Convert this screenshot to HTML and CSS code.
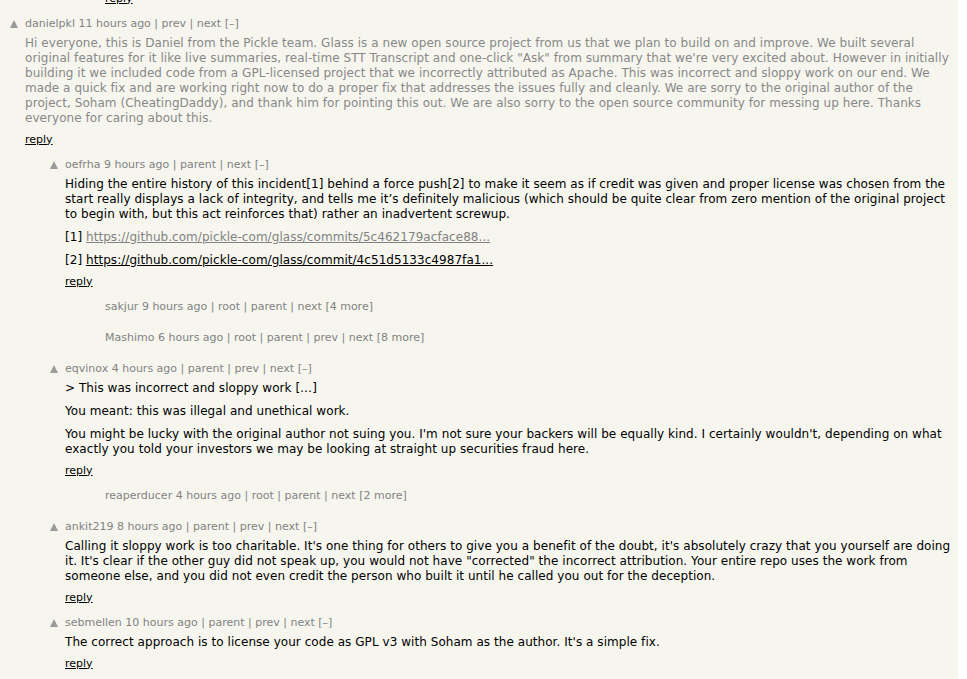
FILE: index.html
```html
<!DOCTYPE html>
<html>
<head>
<meta charset="utf-8">
<title>Hacker News comments</title>
<link rel="stylesheet" href="styles.css">
</head>
<body>
<div class="page">
  <div class="thread">
    <div class="comment d2 stub">
      <div class="vote"></div>
      <div class="main"><div class="reply"><a href="#">reply</a></div></div>
    </div>

    <div class="comment d0">
      <div class="vote"><span class="arrow"></span></div>
      <div class="main">
        <div class="head"><a href="#">danielpkl</a> <a href="#">11 hours ago</a> | <a href="#">prev</a> | <a href="#">next</a> [–]</div>
        <div class="text faded"><p>Hi everyone, this is Daniel from the Pickle team. Glass is a new open source project from us that we plan to build on and improve. We built several original features for it like live summaries, real-time STT Transcript and one-click "Ask" from summary that we're very excited about. However in initially building it we included code from a GPL-licensed project that we incorrectly attributed as Apache. This was incorrect and sloppy work on our end. We made a quick fix and are working right now to do a proper fix that addresses the issues fully and cleanly. We are sorry to the original author of the project, Soham (CheatingDaddy), and thank him for pointing this out. We are also sorry to the open source community for messing up here. Thanks everyone for caring about this.</p></div>
        <div class="reply"><a href="#">reply</a></div>
      </div>
    </div>

    <div class="comment d1">
      <div class="vote"><span class="arrow"></span></div>
      <div class="main">
        <div class="head"><a href="#">oefrha</a> <a href="#">9 hours ago</a> | <a href="#">parent</a> | <a href="#">next</a> [–]</div>
        <div class="text">
          <p>Hiding the entire history of this incident[1] behind a force push[2] to make it seem as if credit was given and proper license was chosen from the start really displays a lack of integrity, and tells me it’s definitely malicious (which should be quite clear from zero mention of the original project to begin with, but this act reinforces that) rather an inadvertent screwup.</p>
          <p>[1] <a class="visited" href="#">https://github.com/pickle-com/glass/commits/5c462179acface88...</a></p>
          <p>[2] <a href="#">https://github.com/pickle-com/glass/commit/4c51d5133c4987fa1...</a></p>
        </div>
        <div class="reply"><a href="#">reply</a></div>
      </div>
    </div>

    <div class="comment d2 collapsed">
      <div class="vote"></div>
      <div class="main">
        <div class="head"><a href="#">sakjur</a> <a href="#">9 hours ago</a> | <a href="#">root</a> | <a href="#">parent</a> | <a href="#">next</a> [4 more]</div>
      </div>
    </div>

    <div class="comment d2 collapsed">
      <div class="vote"></div>
      <div class="main">
        <div class="head"><a href="#">Mashimo</a> <a href="#">6 hours ago</a> | <a href="#">root</a> | <a href="#">parent</a> | <a href="#">prev</a> | <a href="#">next</a> [8 more]</div>
      </div>
    </div>

    <div class="comment d1">
      <div class="vote"><span class="arrow"></span></div>
      <div class="main">
        <div class="head"><a href="#">eqvinox</a> <a href="#">4 hours ago</a> | <a href="#">parent</a> | <a href="#">prev</a> | <a href="#">next</a> [–]</div>
        <div class="text">
          <p>&gt; This was incorrect and sloppy work […]</p>
          <p>You meant: this was illegal and unethical work.</p>
          <p>You might be lucky with the original author not suing you. I'm not sure your backers will be equally kind. I certainly wouldn't, depending on what exactly you told your investors we may be looking at straight up securities fraud here.</p>
        </div>
        <div class="reply"><a href="#">reply</a></div>
      </div>
    </div>

    <div class="comment d2 collapsed">
      <div class="vote"></div>
      <div class="main">
        <div class="head"><a href="#">reaperducer</a> <a href="#">4 hours ago</a> | <a href="#">root</a> | <a href="#">parent</a> | <a href="#">next</a> [2 more]</div>
      </div>
    </div>

    <div class="comment d1">
      <div class="vote"><span class="arrow"></span></div>
      <div class="main">
        <div class="head"><a href="#">ankit219</a> <a href="#">8 hours ago</a> | <a href="#">parent</a> | <a href="#">prev</a> | <a href="#">next</a> [–]</div>
        <div class="text">
          <p>Calling it sloppy work is too charitable. It's one thing for others to give you a benefit of the doubt, it's absolutely crazy that you yourself are doing it. It's clear if the other guy did not speak up, you would not have "corrected" the incorrect attribution. Your entire repo uses the work from someone else, and you did not even credit the person who built it until he called you out for the deception.</p>
        </div>
        <div class="reply"><a href="#">reply</a></div>
      </div>
    </div>

    <div class="comment d1">
      <div class="vote"><span class="arrow"></span></div>
      <div class="main">
        <div class="head"><a href="#">sebmellen</a> <a href="#">10 hours ago</a> | <a href="#">parent</a> | <a href="#">prev</a> | <a href="#">next</a> [–]</div>
        <div class="text">
          <p>The correct approach is to license your code as GPL v3 with Soham as the author. It's a simple fix.</p>
        </div>
        <div class="reply"><a href="#">reply</a></div>
      </div>
    </div>
  </div>
</div>
</body>
</html>
```

FILE: styles.css
```css
html, body {
  margin: 0;
  padding: 0;
  background: #ffffff;
}

body {
  font-family: "DejaVu Sans", Verdana, Geneva, sans-serif;
  color: #000000;
}

.page {
  width: 958px;
  min-height: 100vh;
  background: #f6f6ef;
  overflow: hidden;
}

.thread {
  margin-top: -9.5px;
  padding-right: 4px;
}

.comment {
  display: flex;
  align-items: flex-start;
  padding: 8px 0 2px 0;
}

.comment.stub {
  padding-top: 0;
}

.comment.collapsed {
  padding-bottom: 8px;
}

.comment.d1 { padding-left: 40px; }
.comment.d2 { padding-left: 80px; }

.vote {
  flex: none;
  width: 25px;
}

.arrow {
  display: block;
  width: 0;
  height: 0;
  margin: 4px 0 0 9.5px;
  border-left: 4.5px solid transparent;
  border-right: 4.5px solid transparent;
  border-bottom: 8px solid #9a9a9a;
}

.main {
  flex: 1;
  min-width: 0;
}

.head {
  font-size: 11px;
  line-height: 15px;
  color: #828282;
}

.head a {
  color: #828282;
  text-decoration: none;
}

.text {
  margin-top: 5px;
  font-size: 12px;
  line-height: 15px;
  letter-spacing: 0.05px;
}

.text p {
  margin: 8px 0 0 0;
}

.text p:first-child {
  margin-top: 0;
}

.text a {
  color: #000000;
  text-decoration: underline;
}

.text a.visited {
  color: #828282;
}

.text.faded {
  color: #888888;
}

.reply {
  margin-top: 6px;
  font-size: 11px;
  line-height: 15px;
}

.stub .reply {
  margin-top: 0;
}

.reply a {
  color: #000000;
  text-decoration: underline;
}
```
